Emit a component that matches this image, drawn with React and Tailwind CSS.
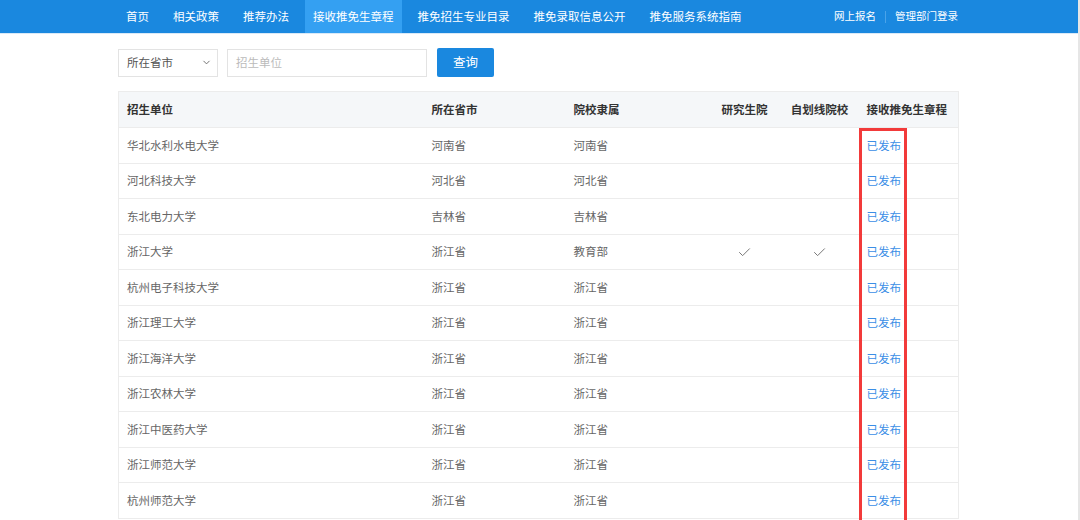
import { Check, ChevronDown } from 'lucide-react'

const NAV = ['首页', '相关政策', '推荐办法', '接收推免生章程', '推免招生专业目录', '推免录取信息公开', '推免服务系统指南']

const ROWS = [
  { name: '华北水利水电大学', prov: '河南省', dept: '河南省' },
  { name: '河北科技大学', prov: '河北省', dept: '河北省' },
  { name: '东北电力大学', prov: '吉林省', dept: '吉林省' },
  { name: '浙江大学', prov: '浙江省', dept: '教育部', grad: true, self: true },
  { name: '杭州电子科技大学', prov: '浙江省', dept: '浙江省' },
  { name: '浙江理工大学', prov: '浙江省', dept: '浙江省' },
  { name: '浙江海洋大学', prov: '浙江省', dept: '浙江省' },
  { name: '浙江农林大学', prov: '浙江省', dept: '浙江省' },
  { name: '浙江中医药大学', prov: '浙江省', dept: '浙江省' },
  { name: '浙江师范大学', prov: '浙江省', dept: '浙江省' },
  { name: '杭州师范大学', prov: '浙江省', dept: '浙江省' },
]

const font = { fontFamily: '"Noto Sans CJK SC", "Noto Sans", sans-serif' }

export default function App() {
  return (
    <div className="relative w-[1080px] h-[520px] overflow-hidden bg-white" style={font}>
      {/* top nav */}
      <div className="h-[34px] bg-[#1a88df] border-b border-[#d9e9f7] flex items-stretch pr-[2px]">
        <div className="ml-[114px] flex items-stretch">
          {NAV.map((n, i) => (
            <div key={n}
              className={`mx-1 px-2 flex items-center text-[11.5px] leading-none text-white ${i === 3 ? 'bg-[#34a0f2]' : ''}`}>
              {n}
            </div>
          ))}
        </div>
        <div className="ml-auto mr-[120px] flex items-center text-[10.5px] leading-none text-white">
          <span>网上报名</span>
          <span className="mx-[9px] w-px h-3 bg-[#4aa3e9]" />
          <span>管理部门登录</span>
        </div>
      </div>

      <div className="ml-[118px] w-[840px]">
        {/* search row */}
        <div className="flex items-center mt-[14px] h-[29px]">
          <div className="w-[100px] h-[28px] border border-[#e3e3e3] flex items-center justify-between pl-2 pr-[5px] text-[11.5px] text-[#555]">
            <span>所在省市</span>
            <ChevronDown size={11} color="#666" strokeWidth={2} />
          </div>
          <div className="ml-[9px] w-[200px] h-[28px] border border-[#e3e3e3] flex items-center pl-2 text-[11.5px] text-[#bbb]">
            招生单位
          </div>
          <div className="ml-[10px] w-[57px] h-[29px] bg-[#1a88df] rounded-[2px] flex items-center justify-center text-[12.5px] text-white">
            查询
          </div>
        </div>

        {/* table */}
        <div className="relative mt-[14px]">
          <table className="w-[840px] table-fixed border-collapse text-[11.5px]">
            <colgroup>
              <col className="w-[305px]" />
              <col className="w-[142px]" />
              <col className="w-[143px]" />
              <col className="w-[72px]" />
              <col className="w-[78px]" />
              <col className="w-[100px]" />
            </colgroup>
            <thead>
              <tr className="h-[36px] bg-[#f5f7f9] text-[#333] font-bold">
                <th className="text-left pl-2 border-l border-t border-[#ececec]">招生单位</th>
                <th className="text-left pl-2 border-t border-[#ececec]">所在省市</th>
                <th className="text-left pl-2 border-t border-[#ececec]">院校隶属</th>
                <th className="text-center border-t border-[#ececec]">研究生院</th>
                <th className="text-center border-t border-[#ececec]">自划线院校</th>
                <th className="text-left pl-2 border-t border-r border-[#ececec]">接收推免生章程</th>
              </tr>
            </thead>
            <tbody className="text-[#666]">
              {ROWS.map(r => (
                <tr key={r.name} className="h-[35.5px] border-y border-[#ececec]">
                  <td className="pl-2 border-l border-[#ececec]">{r.name}</td>
                  <td className="pl-2">{r.prov}</td>
                  <td className="pl-2">{r.dept}</td>
                  <td className="text-center">{r.grad && <Check size={15} strokeWidth={1.6} className="inline-block" color="#777" />}</td>
                  <td className="text-center">{r.self && <Check size={15} strokeWidth={1.6} className="inline-block" color="#777" />}</td>
                  <td className="pl-2 border-r border-[#ececec] text-[#3b8ee6]">已发布</td>
                </tr>
              ))}
            </tbody>
          </table>
          {/* red highlight box */}
          <div className="absolute left-[741px] top-[37px] w-[48px] h-[400px] border-[3px] border-[#f23a3a] pointer-events-none" />
        </div>
      </div>

      {/* right edge line */}
      <div className="absolute right-0 top-0 w-[2px] h-full bg-[#e6e6e6]" />
    </div>
  )
}
